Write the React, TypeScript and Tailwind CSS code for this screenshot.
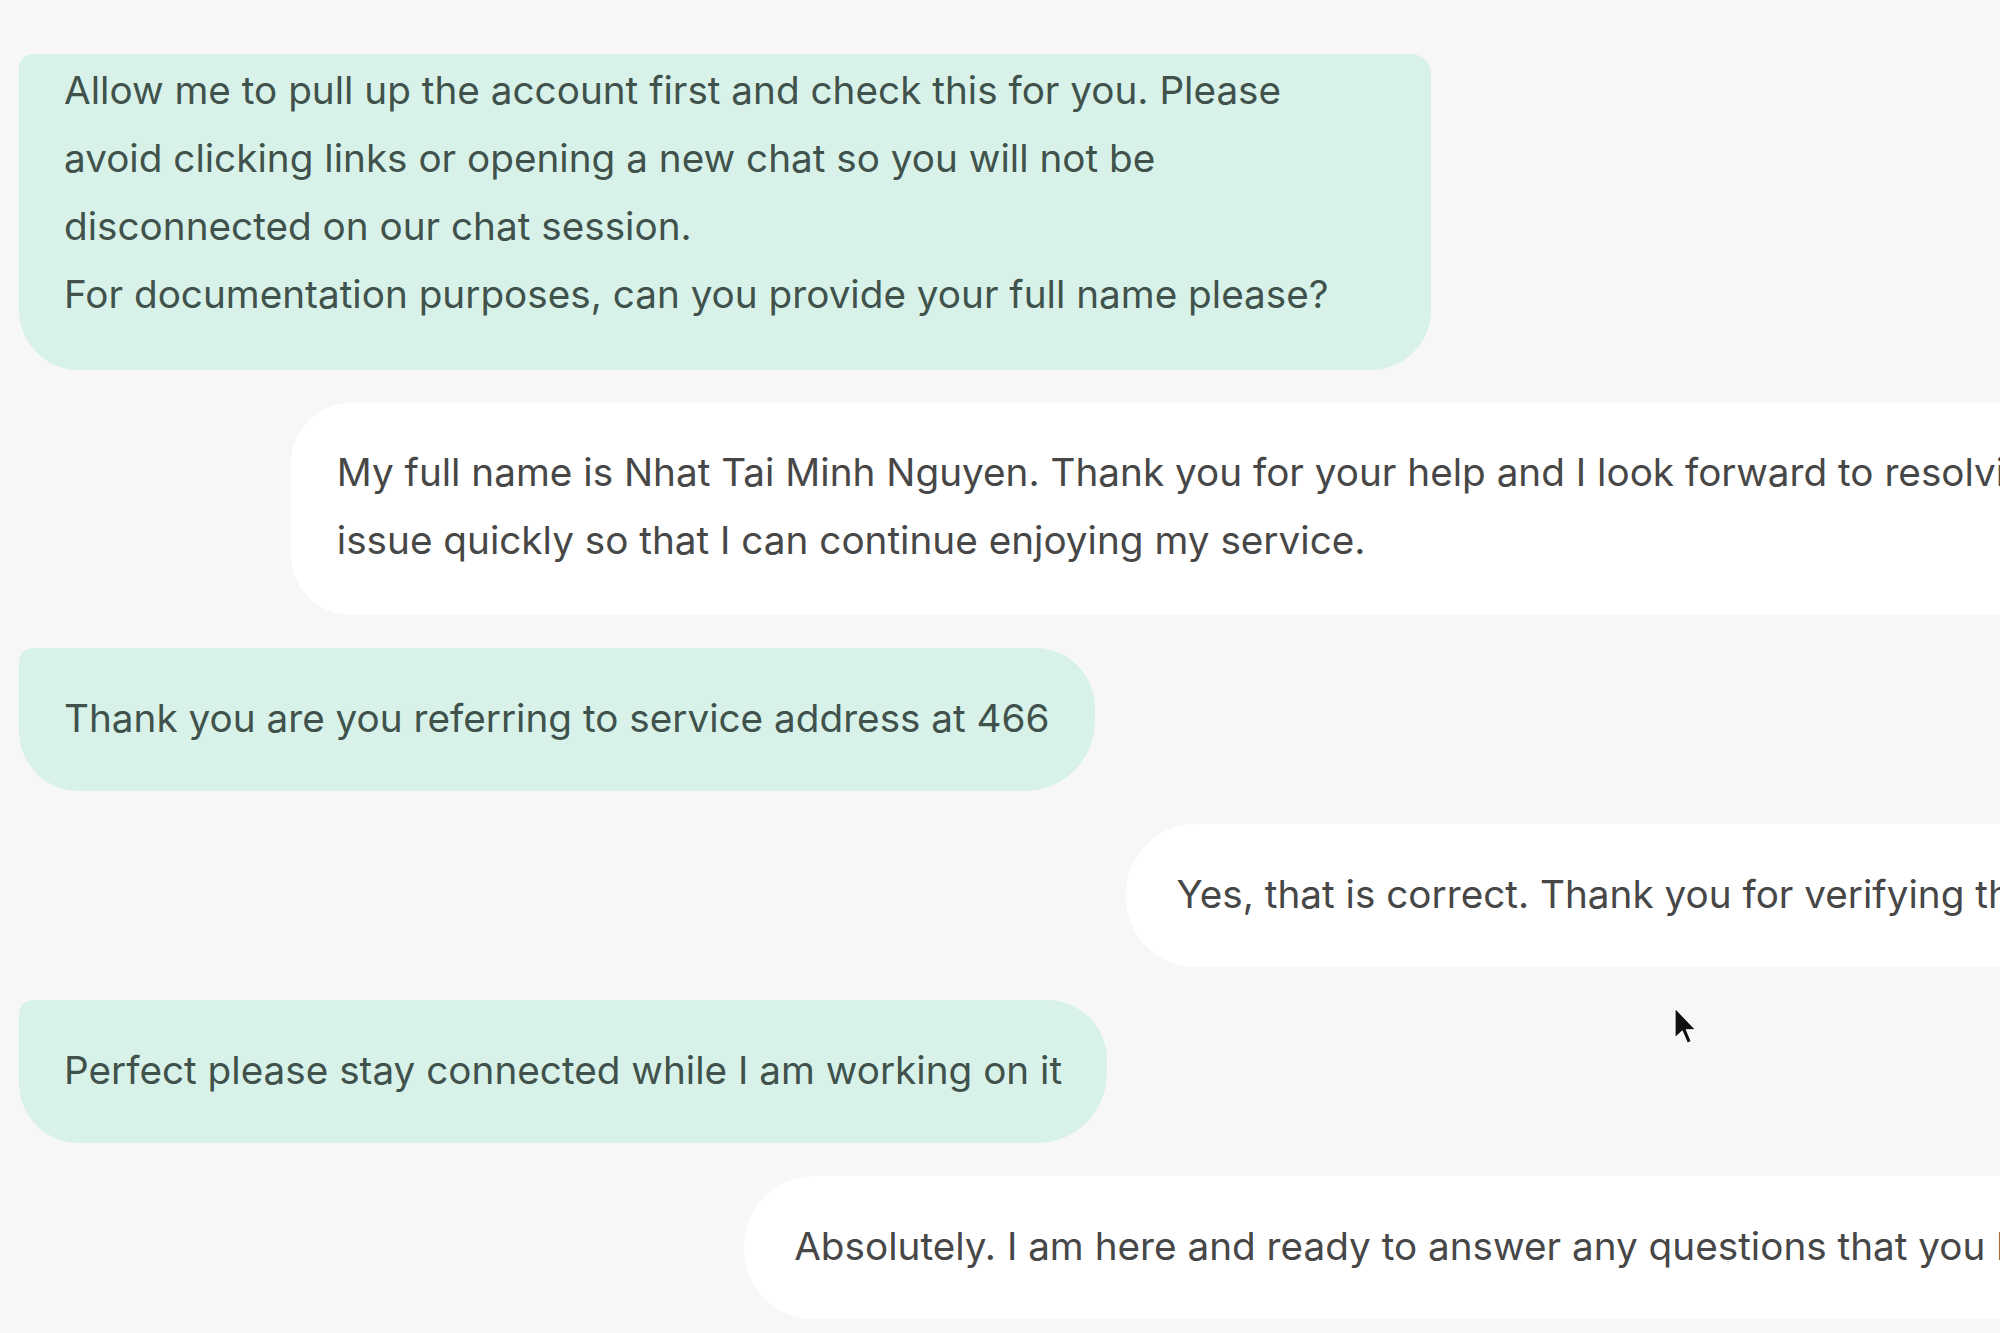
import React from "react";

const font = { fontFamily: "Inter, 'Noto Sans', sans-serif" };

function Cursor() {
  return (
    <svg
      className="absolute left-[1673px] top-[1006px]"
      width="24"
      height="40"
      viewBox="0 0 12 20"
    >
      <path
        d="M1 1 L1 16 L4.6 12.6 L7.2 18.6 L9.2 17.7 L6.7 11.9 L11.4 11.9 Z"
        fill="#111"
        stroke="#fff"
        strokeWidth="0.6"
        strokeLinejoin="round"
      />
    </svg>
  );
}

export default function App() {
  return (
    <div
      className="relative w-[2000px] h-[1333px] overflow-hidden bg-[#f7f7fa]"
      style={font}
    >
      <div className="flex w-[2193px] flex-col gap-[33px] px-[19px] pt-[54px] text-[38.7px] leading-[68px]">
        {/* Agent bubble 1 */}
        <div className="self-start w-[1412px] whitespace-nowrap rounded-tl-[14px] rounded-tr-[20px] rounded-br-[60px] rounded-bl-[60px] bg-[#d8f2ea] px-[45px] pt-[2px] pb-[42px] text-[#40524b]">
          Allow me to pull up the account first and check this for you. Please
          <br />
          avoid clicking links or opening a new chat so you will not be
          <br />
          disconnected on our chat session.
          <br />
          For documentation purposes, can you provide your full name please?
        </div>

        {/* Customer bubble 2 */}
        <div className="self-end whitespace-nowrap rounded-l-[60px] rounded-tr-[14px] rounded-br-[60px] bg-white px-[46px] pt-[35px] pb-[41px] text-[#474747]">
          My full name is Nhat Tai Minh Nguyen. Thank you for your help and I look forward to resolving this
          <br />
          issue quickly so that I can continue enjoying my service.
        </div>

        {/* Agent bubble 3 */}
        <div className="self-start whitespace-nowrap rounded-tl-[14px] rounded-tr-[60px] rounded-br-[70px] rounded-bl-[60px] bg-[#d8f2ea] px-[45px] pt-[36px] pb-[39px] text-[#40524b]">
          Thank you are you referring to service address at 466
        </div>

        {/* Customer bubble 4 */}
        <div className="self-end whitespace-nowrap rounded-l-[70px] rounded-tr-[14px] rounded-br-[60px] bg-white px-[50px] pt-[36px] pb-[39px] text-[#474747]">
          Yes, that is correct. Thank you for verifying the info.
        </div>

        {/* Agent bubble 5 */}
        <div className="self-start whitespace-nowrap rounded-tl-[14px] rounded-tr-[60px] rounded-br-[70px] rounded-bl-[60px] bg-[#d8f2ea] px-[45px] pt-[36px] pb-[39px] text-[#40524b]">
          Perfect please stay connected while I am working on it
        </div>

        {/* Customer bubble 6 */}
        <div className="self-end whitespace-nowrap rounded-l-[70px] rounded-tr-[14px] rounded-br-[60px] bg-white pl-[50px] pr-[79px] pt-[36px] pb-[39px] text-[#474747]">
          Absolutely. I am here and ready to answer any questions that you have.
        </div>
      </div>
      <Cursor />
    </div>
  );
}
